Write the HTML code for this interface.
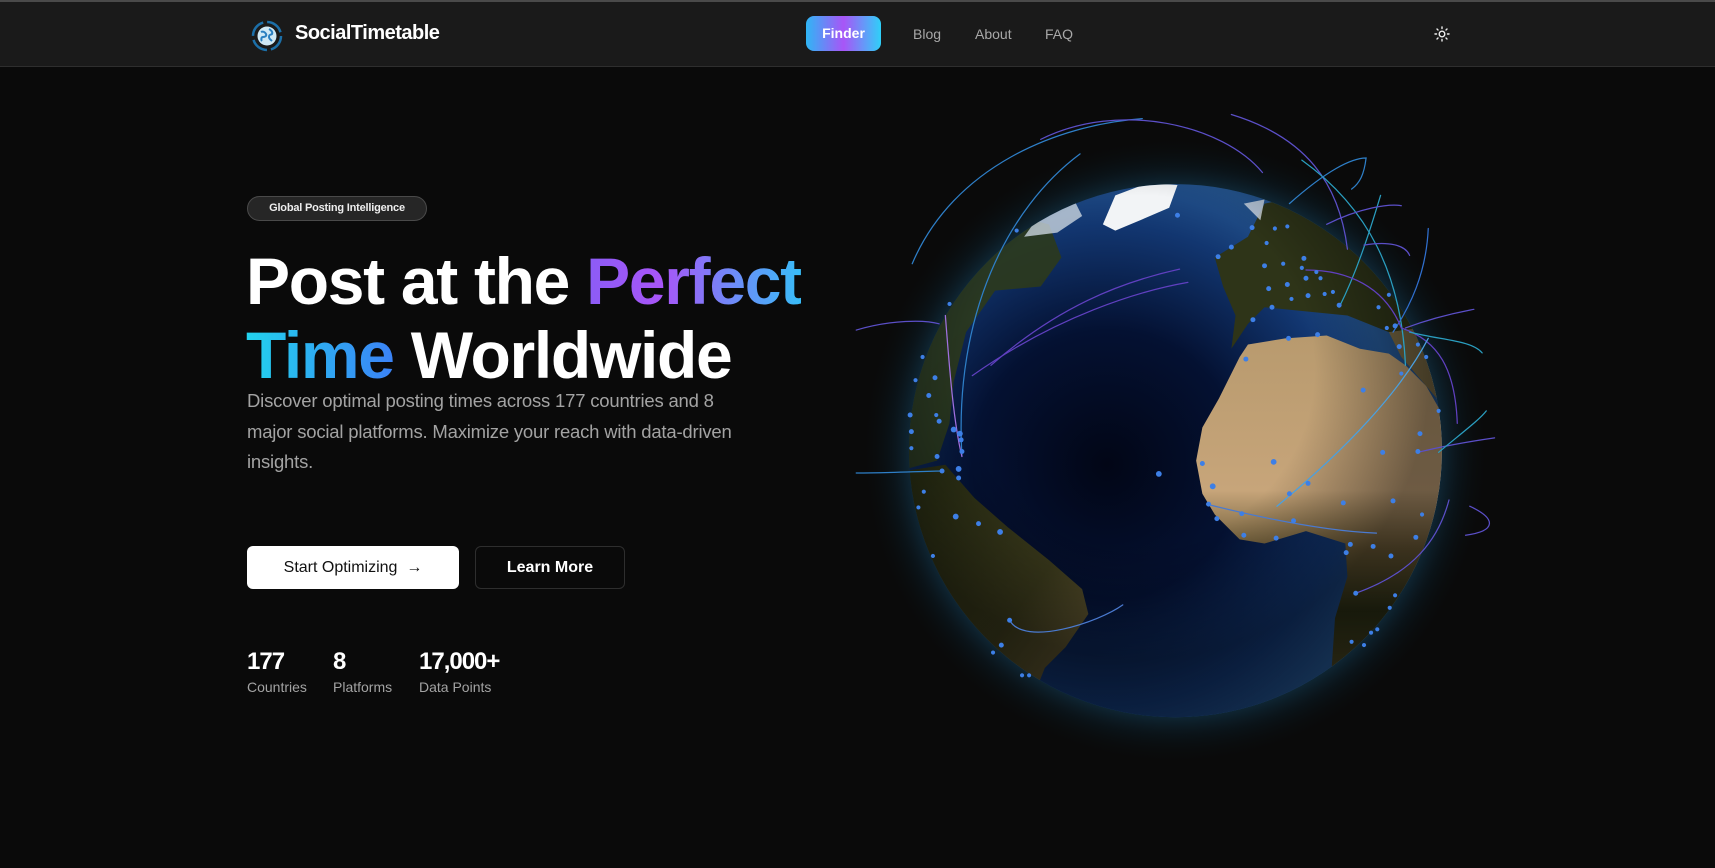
<!DOCTYPE html>
<html><head><meta charset="utf-8"><style>
*{margin:0;padding:0;box-sizing:border-box}
body{width:1715px;height:868px;background:#0a0a0a;font-family:"Liberation Sans",sans-serif;overflow:hidden;position:relative;color:#fff}
.hdr{position:absolute;left:0;top:0;width:1715px;height:67px;background:#1a1a1a;border-top:2px solid #4a4a4a;border-bottom:1px solid #2e2e2e}
.brand{position:absolute;left:295px;top:22px;font-size:20px;font-weight:bold;letter-spacing:-0.5px}
.finder{position:absolute;left:806px;top:16px;width:75px;height:35px;border-radius:8px;background:linear-gradient(90deg,#2fb6f5,#a855f7 50%,#2fd0f8);font-size:14px;font-weight:bold;text-align:center;line-height:35px}
.nav{position:absolute;top:26px;font-size:14px;color:#a8a8a8}
.badge{position:absolute;left:247px;top:196px;width:180px;height:25px;border:1px solid #4a4a4a;background:#262626;border-radius:13px;font-size:11px;font-weight:bold;text-align:center;line-height:23px;color:#eee;letter-spacing:-0.2px}
h1{position:absolute;left:246px;top:244px;font-size:66px;line-height:74px;font-weight:bold;letter-spacing:-1.3px;white-space:nowrap}
.g1{background:linear-gradient(90deg,#8b5cf6,#a855f7 35%,#38bdf8);-webkit-background-clip:text;background-clip:text;color:transparent}
.g2{background:linear-gradient(90deg,#22d3ee,#3b82f6);-webkit-background-clip:text;background-clip:text;color:transparent}
p.d{position:absolute;left:247px;top:386px;width:600px;font-size:18.5px;line-height:30.5px;color:#a3a3a3;letter-spacing:-0.2px;white-space:nowrap}
.b1{position:absolute;left:247px;top:546px;width:212px;height:43px;background:#fff;border-radius:6px;color:#111;font-size:16px;text-align:center;line-height:43px}
.b2{position:absolute;left:475px;top:546px;width:150px;height:43px;border:1px solid #2e2e2e;border-radius:6px;font-size:16px;font-weight:bold;text-align:center;line-height:41px}
.sn{position:absolute;top:648px;font-size:24px;font-weight:bold;letter-spacing:-1px}
.sl{position:absolute;top:679px;font-size:14px;color:#a3a3a3}
</style></head><body>
<div class="hdr"></div>
<svg style="position:absolute;left:250px;top:19px" width="34" height="34" viewBox="0 0 34 34">
<circle cx="17" cy="17" r="14" fill="none" stroke="#1c6fa8" stroke-width="2.5" stroke-dasharray="18 4"/>
<circle cx="17" cy="17" r="9.5" fill="#cfe8f5"/>
<path d="M11 13c2-1 4 0 5 2s-1 3-3 3-2 3-1 4M19 10c2 1 4 3 3 5-1 1-3 0-3 3 0 2 2 3 3 4" stroke="#2a7fc0" stroke-width="2" fill="none"/>
</svg>
<div class="brand">SocialTimetable</div>
<div class="finder">Finder</div>
<div class="nav" style="left:913px">Blog</div>
<div class="nav" style="left:975px">About</div>
<div class="nav" style="left:1045px">FAQ</div>
<svg style="position:absolute;left:1434px;top:26px" width="16" height="16" viewBox="0 0 16 16" stroke="#eee" stroke-width="1.4" fill="none" stroke-linecap="round">
<circle cx="8" cy="8" r="2.8"/><path d="M8 1v1.5M8 13.5V15M1 8h1.5M13.5 8H15M3 3l1 1M12 12l1 1M3 13l1-1M12 4l1-1"/></svg>

<div class="badge">Global Posting Intelligence</div>
<h1>Post at the <span class="g1">Perfect</span><br><span class="g2">Time</span> Worldwide</h1>
<p class="d">Discover optimal posting times across 177 countries and 8<br>major social platforms. Maximize your reach with data-driven<br>insights.</p>
<div class="b1">Start Optimizing &nbsp;→</div>
<div class="b2">Learn More</div>
<div class="sn" style="left:247px">177</div><div class="sl" style="left:247px">Countries</div>
<div class="sn" style="left:333px">8</div><div class="sl" style="left:333px">Platforms</div>
<div class="sn" style="left:419px">17,000+</div><div class="sl" style="left:419px">Data Points</div>

<svg style="position:absolute;left:850px;top:100px;overflow:visible" width="650" height="640" viewBox="0 0 1568 1544">
<defs>
<radialGradient id="glow" cx="785" cy="846" r="760" gradientUnits="userSpaceOnUse">
<stop offset="0.8" stop-color="#1a5a80" stop-opacity="0.6"/><stop offset="0.9" stop-color="#0c2a3c" stop-opacity="0.3"/><stop offset="1" stop-color="#0a0a0a" stop-opacity="0"/></radialGradient>
<radialGradient id="ocean" cx="620" cy="880" r="720" gradientUnits="userSpaceOnUse">
<stop offset="0" stop-color="#020616"/><stop offset="0.45" stop-color="#041132"/><stop offset="0.8" stop-color="#123670"/><stop offset="1" stop-color="#24548e"/></radialGradient>
<linearGradient id="afr" x1="0" y1="0" x2="0" y2="1"><stop offset="0" stop-color="#b89a6e"/><stop offset="0.45" stop-color="#c7a57a"/><stop offset="0.62" stop-color="#6b5a36"/><stop offset="0.8" stop-color="#2a2e14"/><stop offset="1" stop-color="#4b4524"/></linearGradient>
<linearGradient id="sam" x1="0" y1="0" x2="1" y2="1"><stop offset="0" stop-color="#262c12"/><stop offset="0.6" stop-color="#3b3a1c"/><stop offset="1" stop-color="#6e5e3a"/></linearGradient>
<radialGradient id="shade" cx="700" cy="650" r="700" gradientUnits="userSpaceOnUse"><stop offset="0.6" stop-color="#000" stop-opacity="0"/><stop offset="1" stop-color="#000" stop-opacity="0.45"/></radialGradient>
<clipPath id="c"><circle cx="785" cy="846" r="643"/></clipPath>
</defs>
<circle cx="785" cy="846" r="760" fill="url(#glow)"/>
<circle cx="785" cy="846" r="643" fill="url(#ocean)"/>
<g clip-path="url(#c)">
<path d="M100,380 L300,320 400,280 480,300 510,380 460,450 350,460 280,560 250,680 240,780 210,870 100,900 Z" fill="#2c3a1c" opacity="0.9"/>
<path d="M100,900 L230,880 300,960 380,1030 480,1110 560,1180 575,1240 520,1320 470,1370 450,1420 300,1500 100,1300 Z" fill="url(#sam)"/>
<path d="M880,380 L960,330 1000,250 1100,230 1250,300 1350,420 1450,560 1300,560 1200,520 1100,510 1000,500 960,540 920,600 930,520 900,450 Z" fill="#2e3418"/>
<path d="M940,620 L960,590 1050,575 1150,568 1230,600 1300,612 1340,640 1390,690 1430,760 1450,900 1440,1000 1400,1100 1340,1200 1280,1280 1220,1340 1160,1400 1170,1250 1200,1150 1195,1070 1100,1040 1000,1070 940,1060 880,1000 850,950 835,870 850,790 890,720 Z" fill="url(#afr)"/>
<path d="M1300,560 L1450,540 1450,760 1390,690 1330,620 Z" fill="#7a6a44"/>
<path d="M610,300 L640,230 720,200 790,205 770,260 700,290 640,315 Z" fill="#f2f4f6"/>
<path d="M420,330 L470,260 540,240 560,280 500,320 Z" fill="#c9d4de" opacity="0.8"/>
<path d="M950,250 L1000,240 990,290 Z" fill="#d8e0e8" opacity="0.8"/>
<circle cx="785" cy="846" r="643" fill="url(#shade)"/>
</g>
<g fill="none" stroke-width="3" stroke-linecap="round">
<path d="M150,395 C250,160 500,60 705,45" stroke="#2e7fc8"/>
<path d="M460,95 C650,0 900,60 995,175" stroke="#5b4fc8"/>
<path d="M920,35 C1100,90 1180,200 1200,360" stroke="#5b4fc8"/>
<path d="M555,130 C380,260 250,520 270,860" stroke="#2e7fc8"/>
<path d="M1090,145 C1250,260 1330,420 1340,640" stroke="#2a9ec0"/>
<path d="M1060,250 C1150,170 1210,140 1245,140 C1240,180 1230,200 1210,215" stroke="#2e7fc8"/>
<path d="M1280,230 C1250,330 1220,420 1180,500" stroke="#2a9ec0"/>
<path d="M1150,300 C1230,260 1300,250 1330,255" stroke="#5b4fc8"/>
<path d="M1395,310 C1390,420 1350,500 1310,560" stroke="#3070d0"/>
<path d="M1240,350 C1300,340 1340,350 1350,375" stroke="#5b4fc8"/>
<path d="M1100,410 C1200,410 1290,450 1330,550 C1420,580 1460,650 1465,780" stroke="#6040c0"/>
<path d="M1340,550 C1420,520 1480,510 1505,505" stroke="#5b4fc8"/>
<path d="M1350,560 C1430,580 1500,580 1525,610" stroke="#2a9ec0"/>
<path d="M1030,980 C1200,840 1330,700 1395,575" stroke="#4aa0e0"/>
<path d="M1370,850 C1450,830 1520,820 1555,815" stroke="#5b4fc8"/>
<path d="M1420,850 C1480,800 1520,770 1535,750" stroke="#2a9ec0"/>
<path d="M1495,980 C1560,1010 1560,1040 1485,1050" stroke="#5b4fc8"/>
<path d="M1220,1190 C1360,1140 1420,1060 1445,965" stroke="#5b4fc8"/>
<path d="M860,975 C1000,1010 1150,1040 1270,1045" stroke="#4a7ad0"/>
<path d="M385,1255 C420,1320 600,1260 658,1218" stroke="#4a7ad0"/>
<path d="M295,665 C500,520 700,460 815,440" stroke="#6040c0"/>
<path d="M340,640 C500,500 650,440 795,408" stroke="#6040c0"/>
<path d="M15,555 C100,530 180,530 215,540" stroke="#5b4fc8"/>
<path d="M15,900 C100,900 180,895 225,895" stroke="#2e7fc8"/>
<path d="M230,520 C240,650 250,780 270,860" stroke="#a070e0"/>
</g>
<g fill="#3d7fe6">
<circle cx="790" cy="278" r="6"/><circle cx="970" cy="308" r="6"/><circle cx="1025" cy="310" r="5"/><circle cx="1055" cy="305" r="5"/><circle cx="920" cy="355" r="6"/><circle cx="888" cy="378" r="6"/><circle cx="1005" cy="345" r="5"/><circle cx="1000" cy="400" r="6"/><circle cx="1045" cy="395" r="5"/><circle cx="1095" cy="382" r="6"/><circle cx="1090" cy="405" r="5"/><circle cx="1125" cy="415" r="5"/><circle cx="1100" cy="430" r="6"/><circle cx="1135" cy="430" r="5"/><circle cx="1055" cy="445" r="6"/><circle cx="1010" cy="455" r="6"/><circle cx="1105" cy="472" r="6"/><circle cx="1145" cy="468" r="5"/><circle cx="1165" cy="463" r="5"/><circle cx="1180" cy="495" r="6"/><circle cx="1065" cy="480" r="5"/><circle cx="1018" cy="500" r="6"/><circle cx="972" cy="530" r="6"/><circle cx="1058" cy="575" r="6"/><circle cx="1128" cy="566" r="6"/><circle cx="955" cy="625" r="6"/><circle cx="1275" cy="500" r="5"/><circle cx="1300" cy="470" r="5"/><circle cx="1315" cy="545" r="6"/><circle cx="1295" cy="550" r="5"/><circle cx="1325" cy="595" r="6"/><circle cx="1370" cy="590" r="5"/><circle cx="1390" cy="620" r="5"/><circle cx="1330" cy="660" r="5"/><circle cx="1238" cy="700" r="6"/><circle cx="1420" cy="750" r="5"/><circle cx="1375" cy="805" r="6"/><circle cx="1370" cy="848" r="6"/><circle cx="1285" cy="850" r="6"/><circle cx="1022" cy="873" r="7"/><circle cx="850" cy="877" r="6"/><circle cx="745" cy="902" r="7"/><circle cx="875" cy="932" r="7"/><circle cx="1105" cy="925" r="6"/><circle cx="1060" cy="950" r="6"/><circle cx="865" cy="975" r="6"/><circle cx="945" cy="998" r="6"/><circle cx="885" cy="1010" r="6"/><circle cx="1070" cy="1015" r="6"/><circle cx="950" cy="1050" r="6"/><circle cx="1028" cy="1057" r="6"/><circle cx="1190" cy="972" r="6"/><circle cx="1310" cy="967" r="6"/><circle cx="1207" cy="1072" r="6"/><circle cx="1262" cy="1077" r="6"/><circle cx="1197" cy="1092" r="6"/><circle cx="1305" cy="1100" r="6"/><circle cx="1365" cy="1055" r="6"/><circle cx="1380" cy="1000" r="5"/><circle cx="1220" cy="1190" r="6"/><circle cx="1315" cy="1195" r="5"/><circle cx="1302" cy="1225" r="5"/><circle cx="1272" cy="1277" r="5"/><circle cx="1257" cy="1285" r="5"/><circle cx="1210" cy="1307" r="5"/><circle cx="1240" cy="1315" r="5"/><circle cx="240" cy="492" r="5"/><circle cx="175" cy="620" r="5"/><circle cx="205" cy="670" r="6"/><circle cx="158" cy="676" r="5"/><circle cx="190" cy="713" r="6"/><circle cx="145" cy="760" r="6"/><circle cx="208" cy="760" r="5"/><circle cx="215" cy="775" r="6"/><circle cx="250" cy="795" r="7"/><circle cx="265" cy="805" r="7"/><circle cx="268" cy="820" r="6"/><circle cx="148" cy="800" r="6"/><circle cx="148" cy="840" r="5"/><circle cx="210" cy="860" r="6"/><circle cx="270" cy="848" r="6"/><circle cx="262" cy="890" r="7"/><circle cx="222" cy="895" r="6"/><circle cx="262" cy="912" r="6"/><circle cx="178" cy="945" r="5"/><circle cx="165" cy="983" r="5"/><circle cx="255" cy="1005" r="7"/><circle cx="310" cy="1022" r="6"/><circle cx="362" cy="1042" r="7"/><circle cx="200" cy="1100" r="5"/><circle cx="385" cy="1255" r="6"/><circle cx="365" cy="1315" r="6"/><circle cx="432" cy="1388" r="5"/><circle cx="415" cy="1388" r="5"/><circle cx="345" cy="1333" r="5"/><circle cx="402" cy="315" r="5"/>
</g>
</svg>
</body></html>
